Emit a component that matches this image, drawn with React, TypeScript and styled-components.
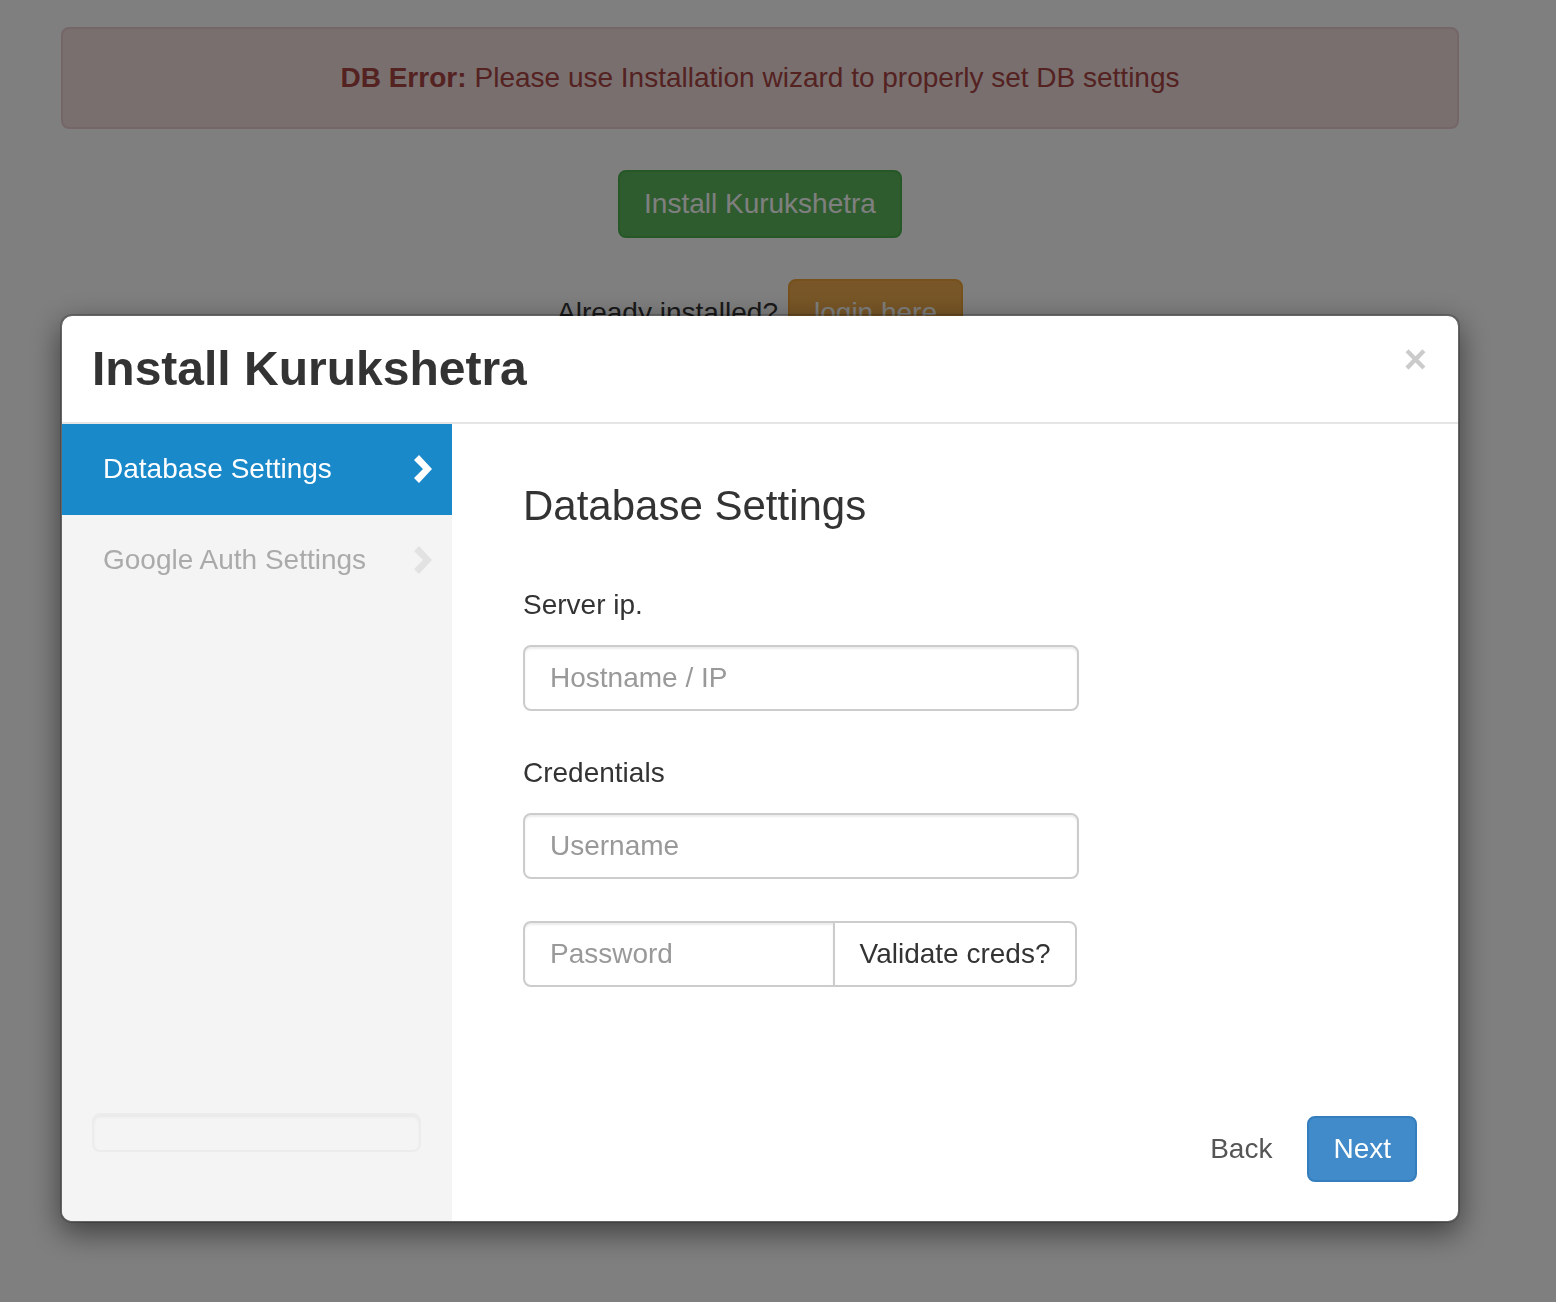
import React from 'react';
import styled, { createGlobalStyle } from 'styled-components';

const GlobalStyle = createGlobalStyle`
  html, body {
    margin: 0;
    padding: 0;
    background: #fff;
    font-family: "Liberation Sans", Arial, Helvetica, sans-serif;
    color: #333;
  }
  * { box-sizing: border-box; }
`;

const Page = styled.div`
  width: 1398px;
  margin-left: 61px;
  padding-top: 27px;
  display: flex;
  flex-direction: column;
  align-items: center;
`;

const Alert = styled.div`
  width: 100%;
  height: 102px;
  background: #f2dede;
  border: 2px solid #ebccd1;
  border-radius: 8px;
  color: #a94442;
  font-size: 28px;
  display: flex;
  align-items: center;
  justify-content: center;

  strong { font-weight: bold; margin-right: 8px; }
`;

const PageButton = styled.button<{ $variant: 'success' | 'warning' }>`
  font-family: inherit;
  font-size: 28px;
  color: #fff;
  border-radius: 8px;
  padding: 0 24px;
  height: 68px;
  ${p => p.$variant === 'success'
    ? 'background: #5cb85c; border: 2px solid #4cae4c;'
    : 'background: #f0ad4e; border: 2px solid #eea236;'}
`;

const InstallRow = styled.div`
  margin-top: 41px;
`;

const LoginRow = styled.div`
  margin-top: 41px;
  display: flex;
  align-items: center;
  gap: 10px;
  font-size: 28px;
`;

const Backdrop = styled.div`
  position: fixed;
  inset: 0;
  background: rgba(0, 0, 0, 0.5);
`;

const ModalLayer = styled.div`
  position: fixed;
  inset: 0;
  padding: 314px 0 0 60px;
`;

const Modal = styled.div`
  width: 1400px;
  background: #fff;
  border: 2px solid rgba(0, 0, 0, 0.2);
  border-radius: 12px;
  box-shadow: 0 10px 30px rgba(0, 0, 0, 0.5);
  background-clip: padding-box;
  overflow: hidden;
`;

const ModalHeader = styled.div`
  display: flex;
  justify-content: space-between;
  align-items: flex-start;
  padding: 27px 31px 26px 30px;
  border-bottom: 2px solid #e5e5e5;
`;

const ModalTitle = styled.h4`
  margin: 0;
  font-size: 48px;
  line-height: 1.1;
  font-weight: bold;
  color: #333;
`;

const Close = styled.button`
  background: none;
  border: 0;
  padding: 0;
  margin-top: -4px;
  font-family: inherit;
  font-size: 40px;
  line-height: 1;
  font-weight: bold;
  color: #000;
  opacity: 0.2;
`;

const ModalBody = styled.div`
  display: flex;
  height: 797px;
`;

const Sidebar = styled.div`
  width: 390px;
  background: #f4f4f4;
  display: flex;
  flex-direction: column;
`;

const StepItem = styled.div<{ $active?: boolean }>`
  height: 91px;
  padding: 0 20px 0 41px;
  display: flex;
  align-items: center;
  justify-content: space-between;
  font-size: 28px;
  background: ${p => (p.$active ? '#1a89ca' : 'transparent')};
  color: ${p => (p.$active ? '#fff' : '#aaa')};
`;

const Well = styled.div`
  margin: auto 31px 69px 30px;
  height: 39px;
  border: 2px solid #ececec;
  border-radius: 8px;
  box-shadow: inset 0 2px 3px rgba(0, 0, 0, 0.05);
`;

const Content = styled.div`
  flex: 1;
  padding: 59px 41px 39px 71px;
  display: flex;
  flex-direction: column;
`;

const Heading = styled.h3`
  margin: 0 0 56px;
  font-size: 42px;
  line-height: 1.1;
  font-weight: normal;
  color: #333;
`;

const Label = styled.label`
  display: block;
  font-size: 28px;
  line-height: 40px;
  margin-bottom: 20px;
  color: #333;
`;

const FormGroup = styled.div<{ $gap: number }>`
  width: 556px;
  margin-bottom: ${p => p.$gap}px;
`;

const Input = styled.input`
  display: block;
  width: 100%;
  height: 66px;
  padding: 0 25px;
  font-family: inherit;
  font-size: 28px;
  color: #555;
  border: 2px solid #ccc;
  border-radius: 8px;
  box-shadow: inset 0 2px 2px rgba(0, 0, 0, 0.075);
  outline: none;

  &::placeholder { color: #999; }
`;

const InputGroup = styled.div`
  display: flex;
  width: 554px;

  ${Input} {
    width: 312px;
    border-radius: 8px 0 0 8px;
  }
`;

const AddonButton = styled.button`
  flex: 1;
  height: 66px;
  margin-left: -2px;
  font-family: inherit;
  font-size: 28px;
  color: #333;
  background: #fff;
  border: 2px solid #ccc;
  border-radius: 0 8px 8px 0;
`;

const Footer = styled.div`
  margin-top: auto;
  display: flex;
  justify-content: flex-end;
  align-items: center;
  gap: 9px;
`;

const LinkButton = styled.button`
  background: none;
  border: 0;
  height: 66px;
  padding: 0 26px;
  font-family: inherit;
  font-size: 28px;
  color: #555;
`;

const PrimaryButton = styled.button`
  height: 66px;
  padding: 0 24px;
  font-family: inherit;
  font-size: 28px;
  color: #fff;
  background: #428bca;
  border: 2px solid #357ebd;
  border-radius: 8px;
`;

function Chevron({ color }: { color: string }) {
  return (
    <svg width="18" height="28" viewBox="0 0 18 28">
      <polygon points="0,5 5,0 18,14 5,28 0,23 9,14" fill={color} />
    </svg>
  );
}

export default function App() {
  return (
    <>
      <GlobalStyle />
      <Page>
        <Alert>
          <strong>DB Error:</strong> Please use Installation wizard to properly set DB settings
        </Alert>
        <InstallRow>
          <PageButton $variant="success">Install Kurukshetra</PageButton>
        </InstallRow>
        <LoginRow>
          Already installed?
          <PageButton $variant="warning">login here</PageButton>
        </LoginRow>
      </Page>
      <Backdrop />
      <ModalLayer>
        <Modal>
          <ModalHeader>
            <ModalTitle>Install Kurukshetra</ModalTitle>
            <Close aria-label="Close">×</Close>
          </ModalHeader>
          <ModalBody>
            <Sidebar>
              <StepItem $active>
                Database Settings
                <Chevron color="#fff" />
              </StepItem>
              <StepItem>
                Google Auth Settings
                <Chevron color="#e2e2e2" />
              </StepItem>
              <Well />
            </Sidebar>
            <Content>
              <Heading>Database Settings</Heading>
              <FormGroup $gap={42}>
                <Label>Server ip.</Label>
                <Input placeholder="Hostname / IP" />
              </FormGroup>
              <FormGroup $gap={42}>
                <Label>Credentials</Label>
                <Input placeholder="Username" />
              </FormGroup>
              <InputGroup>
                <Input type="password" placeholder="Password" />
                <AddonButton>Validate creds?</AddonButton>
              </InputGroup>
              <Footer>
                <LinkButton>Back</LinkButton>
                <PrimaryButton>Next</PrimaryButton>
              </Footer>
            </Content>
          </ModalBody>
        </Modal>
      </ModalLayer>
    </>
  );
}
